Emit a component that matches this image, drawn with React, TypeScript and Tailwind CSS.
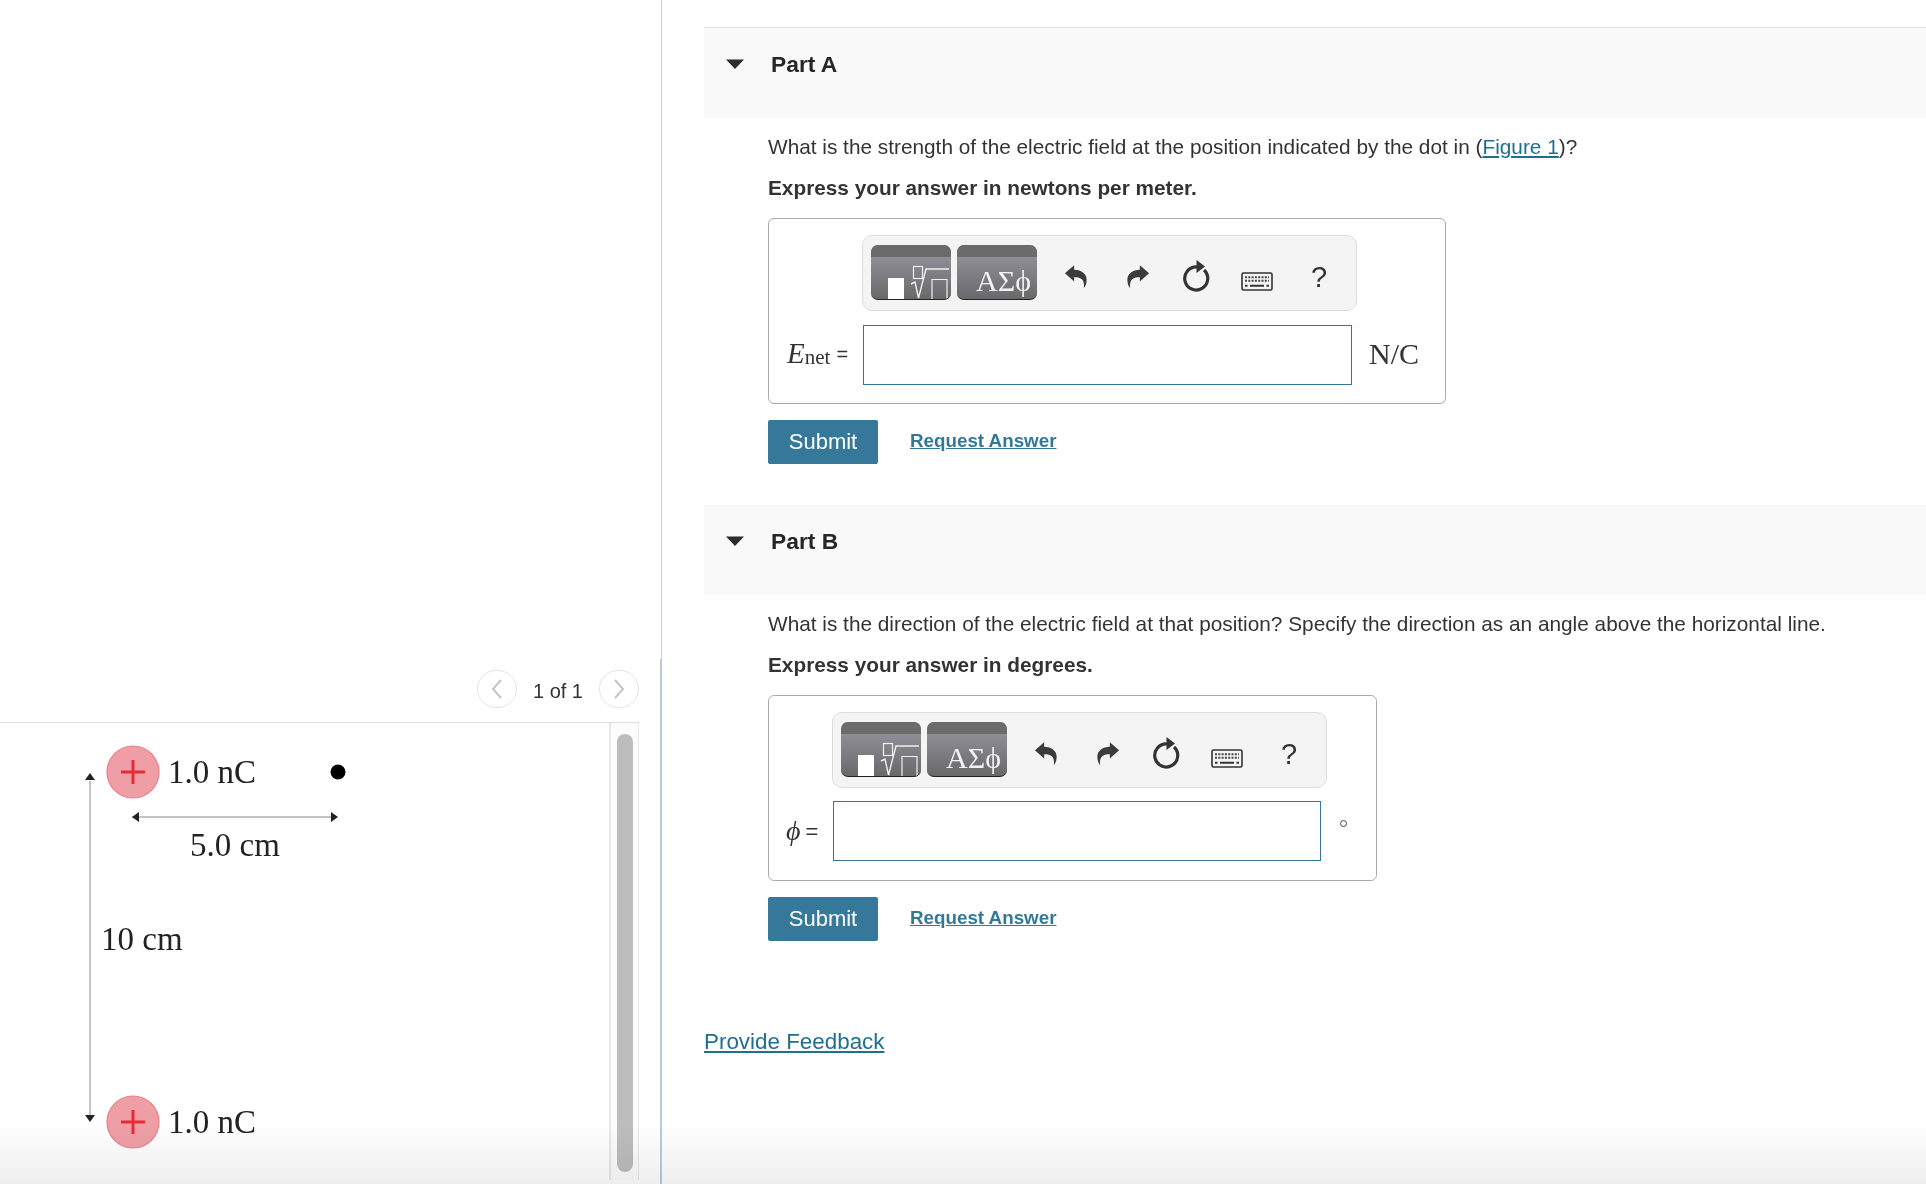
import React from "react";

const Undo = ({ flip = false }: { flip?: boolean }) => (
  <svg width="24" height="25" viewBox="0 0 26 30" preserveAspectRatio="none" className={flip ? "-scale-x-100" : ""}>
    <path d="M1 11 L11 1.5 L11 7 C19 7 25 12 24.5 20 C24.3 24 23 27 21.5 29 C22 24 21.5 20 19 18 C17 16.5 14 16 11 16 L11 21 Z" fill="#3b3b3b" />
  </svg>
);

const Toolbar = () => (
  <div className="flex h-[76px] w-[495px] items-start rounded-[10px] border border-[#dddddd] bg-[#f4f4f4] pl-[8px] pt-[9px]">
    <div className="relative h-[55px] w-[80px] overflow-hidden rounded-[7px] border-b border-[#222222] bg-gradient-to-b from-[#9a98a3] to-[#69696b]">
      <div className="h-[12px] bg-[#6b6b6b]" />
      <svg width="80" height="55" viewBox="0 0 80 55" className="absolute left-0 top-0">
        <rect x="17" y="33" width="16" height="22" fill="#ffffff" />
        <rect x="42.5" y="21.5" width="9" height="12" fill="none" stroke="#f0f0f0" strokeWidth="1.2" />
        <path d="M40 39 L44 37 L47.5 53 L55 24 L78 24" fill="none" stroke="#f0f0f0" strokeWidth="1.4" />
        <path d="M61 55 L61 34.5 L76 34.5 L76 55" fill="none" stroke="#f0f0f0" strokeWidth="1.2" />
      </svg>
    </div>
    <div className="relative ml-[6px] h-[55px] w-[80px] overflow-hidden rounded-[7px] border-b border-[#222222] bg-gradient-to-b from-[#9a98a3] to-[#69696b]">
      <div className="h-[12px] bg-[#6b6b6b]" />
      <div className="absolute left-[19px] top-[20px] whitespace-nowrap font-['Liberation_Serif',serif] text-[30px] leading-[32px] text-[#f2f2f2]">ΑΣϕ</div>
    </div>
    <div className="ml-[27px] mt-[19px]"><Undo /></div>
    <div className="ml-[38px] mt-[19px]"><Undo flip /></div>
    <svg width="30" height="34" viewBox="0 0 30 34" className="ml-[32px] mt-[13px]">
      <path d="M22 12 A 11.5 11.5 0 1 1 15 9" fill="none" stroke="#333333" strokeWidth="3.2" />
      <path d="M14.5 2 L23 8.5 L14.5 15 Z" fill="#333333" />
    </svg>
    <svg width="32" height="19" viewBox="0 0 32 19" className="ml-[29px] mt-[27px]">
      <rect x="1" y="1" width="30" height="17" rx="1.5" fill="#f4f4f4" stroke="#333333" strokeWidth="1.6" />
      <path d="M4 5.2 H28 M4 8.8 H28" stroke="#444444" strokeWidth="2" strokeDasharray="2 1.3" />
      <path d="M4 13.8 H6.5 M9 13.8 H23 M25.5 13.8 H28" stroke="#333333" strokeWidth="2" />
    </svg>
    <div className="ml-[38px] mt-[14px] font-['Liberation_Sans',sans-serif] text-[29px] leading-[36px] text-[#333333]">?</div>
  </div>
);

const Answer = ({
  boxW,
  toolbarPad,
  inputW,
  label,
  unit,
}: {
  boxW: string;
  toolbarPad: string;
  inputW: string;
  label: React.ReactNode;
  unit: React.ReactNode;
}) => (
  <>
    <div className={`h-[186px] rounded-[6px] border border-[#aaaaaa] pt-[16px] ${boxW}`}>
      <div className={toolbarPad}>
        <Toolbar />
      </div>
      <div className="mt-[13px] flex items-center">
        {label}
        <div className={`h-[60px] border border-[#337899] bg-white ${inputW}`} />
        {unit}
      </div>
    </div>
    <div className="mt-[16px] flex items-center">
      <button className="h-[44px] w-[110px] rounded-[2px] bg-[#367899] pb-[2px] text-[22px] text-white">Submit</button>
      <a className="mb-[2px] ml-[32px] text-[18.8px] font-bold text-[#337899] underline">Request Answer</a>
    </div>
  </>
);

const Header = ({ title }: { title: string }) => (
  <div className="flex h-[90px] items-start bg-[#f9f9f9] pl-[22px] pt-[21px]">
    <svg width="18" height="10" viewBox="0 0 18 10" className="mt-[10px]">
      <path d="M0 0.5 H18 L9 10 Z" fill="#2b2b2b" />
    </svg>
    <div className="ml-[27px] text-[22.8px] font-bold leading-[30px] text-[#262626]">{title}</div>
  </div>
);

const Figure = () => (
  <svg width="609" height="457" viewBox="0 0 609 457">
    <defs>
      <g id="q">
        <ellipse cx="0" cy="0" rx="26" ry="26" fill="#ef9ea6" stroke="#e8808a" strokeWidth="1.2" />
        <path d="M-12 0 H12 M0 -12 V12" stroke="#e52d38" strokeWidth="3" />
      </g>
    </defs>
    <use href="#q" x="133" y="49" />
    <use href="#q" x="133" y="399" />
    <g fontFamily="'Liberation Serif', serif" fontSize="33" fill="#222222">
      <text x="168" y="60">1.0 nC</text>
      <text x="168" y="410">1.0 nC</text>
      <text x="190" y="133">5.0 cm</text>
      <text x="101" y="227">10 cm</text>
    </g>
    <circle cx="338" cy="49" r="7.5" fill="#000000" />
    <path d="M132 94 H336" stroke="#c4c4c4" strokeWidth="2" />
    <path d="M132 94 L139 89 V99 Z M338 94 L331 89 V99 Z" fill="#222222" />
    <path d="M90 58 V393" stroke="#c4c4c4" strokeWidth="2" />
    <path d="M90 50 L85 57 H95 Z M90 399 L85 392 H95 Z" fill="#222222" />
  </svg>
);

export default function App() {
  return (
    <div className="relative flex h-[1184px] w-[1926px] overflow-hidden bg-white font-['Liberation_Sans',sans-serif] text-[#333333]">
      <div className="flex h-full w-[660px] flex-col justify-end pb-[4px]">
        <div className="flex h-[55px] w-[639px] items-start justify-end pt-[3px]">
          <div className="flex h-[38px] w-[40px] items-center justify-center rounded-full border border-[#e5e5e5] bg-white">
            <svg width="14" height="22" viewBox="0 0 14 22"><path d="M11 2 L3 11 L11 20" fill="none" stroke="#c4c4c4" strokeWidth="2" /></svg>
          </div>
          <div className="mx-[16px] mt-[5px] text-[20px] leading-[32px] text-[#333333]">1 of 1</div>
          <div className="flex h-[38px] w-[40px] items-center justify-center rounded-full border border-[#e5e5e5] bg-white">
            <svg width="14" height="22" viewBox="0 0 14 22"><path d="M3 2 L11 11 L3 20" fill="none" stroke="#c4c4c4" strokeWidth="2" /></svg>
          </div>
        </div>
        <div className="flex h-[458px] w-[639px] border-t border-[#dddddd]">
          <div className="w-[609px]"><Figure /></div>
          <div className="flex h-full w-[30px] justify-center border-l-2 border-r border-l-[#e8e8e8] border-r-[#e8e8e8] bg-[#fcfcfc] pt-[11px]">
            <div className="h-[438px] w-[16px] rounded-full bg-[#bdbdbd]" />
          </div>
        </div>
      </div>

      <div className="flex h-full w-[2px] flex-col">
        <div className="ml-px h-[659px] w-px bg-[#c9d3de]" />
        <div className="w-[2px] flex-1 bg-[#b9cbe0]" />
      </div>

      <div className="flex-1 pl-[42px] pt-[27px]">
        <section className="border-t border-[#e2e2e2]">
          <Header title="Part A" />
          <div className="pl-[64px]">
            <p className="mt-[16px] text-[20.8px] leading-[26px]">
              What is the strength of the electric field at the position indicated by the dot in (<a className="text-[#1f6f8f] underline">Figure 1</a>)?
            </p>
            <p className="mb-[17px] mt-[15px] text-[20.8px] font-bold leading-[26px]">Express your answer in newtons per meter.</p>
            <Answer
              boxW="w-[678px]"
              toolbarPad="pl-[93px]"
              inputW="w-[489px]"
              label={
                <div className="mb-[2px] flex h-[60px] w-[94px] items-center pl-[18px] font-['Liberation_Serif',serif] text-[#333333]">
                  <span className="text-[29px] italic">E</span>
                  <span className="mt-[8px] text-[21px]">net</span>
                  <span className="ml-[6px] font-['Liberation_Sans',sans-serif] text-[20px]">=</span>
                </div>
              }
              unit={<div className="mb-[4px] ml-[17px] font-['Liberation_Serif',serif] text-[30px] text-[#333333]">N/C</div>}
            />
          </div>
        </section>
        <section className="mt-[41px]">
          <Header title="Part B" />
          <div className="pl-[64px]">
            <p className="mt-[16px] text-[20.8px] leading-[26px]">
              What is the direction of the electric field at that position? Specify the direction as an angle above the horizontal line.
            </p>
            <p className="mb-[17px] mt-[15px] text-[20.8px] font-bold leading-[26px]">Express your answer in degrees.</p>
            <Answer
              boxW="w-[609px]"
              toolbarPad="pl-[63px]"
              inputW="w-[488px]"
              label={
                <div className="flex h-[60px] w-[64px] items-center pl-[17px] font-['Liberation_Serif',serif] text-[#333333]">
                  <span className="text-[28px] italic">ϕ</span>
                  <span className="ml-[5px] font-['Liberation_Sans',sans-serif] text-[22px]">=</span>
                </div>
              }
              unit={<div className="mb-[16px] ml-[19px] h-[7px] w-[7px] rounded-full border border-[#444444]" />}
            />
          </div>
        </section>
        <a className="mt-[86px] block text-[22.4px] leading-[30px] text-[#1f6f8f] underline">Provide Feedback</a>
      </div>

      <div className="pointer-events-none absolute inset-x-0 bottom-0 h-[60px] bg-gradient-to-b from-white to-[#eeeeee] mix-blend-multiply" />
    </div>
  );
}
